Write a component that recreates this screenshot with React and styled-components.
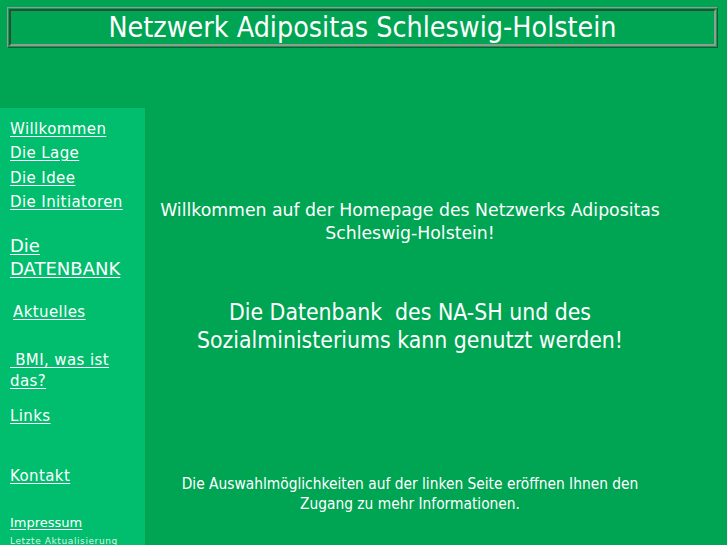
import React from "react";
import styled, { createGlobalStyle } from "styled-components";

const Global = createGlobalStyle`
  html, body { margin: 0; padding: 0; background: #00a553; }
  body { font-family: "DejaVu Sans", Verdana, sans-serif; color: #fff; }
  #root { min-height: 545px; }
`;

const Page = styled.div`
  width: 727px;
  height: 545px;
  overflow: hidden;
  display: flex;
  flex-direction: column;
`;

const HeaderOuter = styled.div`
  margin: 7px 9px 0 7px;
  padding: 1px;
  border: 1px solid;
  border-color: #8aa08f #2f4a38 #2f4a38 #8aa08f;
`;

const HeaderCell = styled.div`
  border: 2px solid;
  border-color: #2f4a38 #8aa08f #8aa08f #2f4a38;
  height: 32px;
  display: flex;
  align-items: center;
  justify-content: center;
  font-family: "DejaVu Sans Condensed", "DejaVu Sans", sans-serif;
  font-size: 28.4px;
  padding-bottom: 1px;
  box-sizing: content-box;
  color: #fff;
`;

const Body = styled.div`
  flex: 1;
  display: flex;
  margin-top: 60px;
`;

const Sidebar = styled.nav`
  width: 145px;
  background: #00be6e;
  padding: 9px 16px 0 10px;
  box-sizing: border-box;
  display: flex;
  flex-direction: column;
  align-items: flex-start;
`;

const NavLink = styled.a`
  color: #fff;
  text-decoration: underline;
  font-size: ${(p) => p.$size || 15}px;
  line-height: ${(p) => p.$lh || 24.3}px;
  margin-top: ${(p) => p.$mt || 0}px;
  padding-left: ${(p) => p.$indent || 0}px;
  letter-spacing: ${(p) => p.$ls ?? 0.4}px;
  text-underline-offset: 2px;
`;

const Updated = styled.div`
  font-size: 9px;
  line-height: 12px;
  letter-spacing: 0.6px;
  color: #d8f5e4;
  margin-top: 0;
`;

const Main = styled.main`
  flex: 1;
  display: flex;
  flex-direction: column;
  align-items: center;
  text-align: center;
  padding: 91px 52px 0 0;
`;

const Welcome = styled.p`
  margin: 0;
  font-size: 17.3px;
  line-height: 23px;
  white-space: nowrap;
`;

const Headline = styled.p`
  margin: 53px 0 0;
  font-family: "DejaVu Sans Condensed", "DejaVu Sans", sans-serif;
  font-size: 22.8px;
  line-height: 28px;
  white-space: nowrap;
`;

const Note = styled.p`
  margin: 120px 0 0;
  font-family: "DejaVu Sans Condensed", "DejaVu Sans", sans-serif;
  font-size: 15.35px;
  line-height: 20px;
  white-space: nowrap;
`;

export default function App() {
  return (
    <Page>
      <Global />
      <HeaderOuter>
        <HeaderCell>Netzwerk Adipositas Schleswig-Holstein</HeaderCell>
      </HeaderOuter>
      <Body>
        <Sidebar>
          <NavLink href="#">Willkommen</NavLink>
          <NavLink href="#">Die Lage</NavLink>
          <NavLink href="#">Die Idee</NavLink>
          <NavLink href="#">Die Initiatoren</NavLink>
          <NavLink href="#" $size={18} $lh={23} $mt={20} $ls={0}>Die<br />DATENBANK</NavLink>
          <NavLink href="#" $mt={20} $indent={3}>Aktuelles</NavLink>
          <NavLink href="#" $mt={26} $lh={21}>&nbsp;BMI, was ist<br />das?</NavLink>
          <NavLink href="#" $mt={12}>Links</NavLink>
          <NavLink href="#" $mt={35}>Kontakt</NavLink>
          <NavLink href="#" $size={13} $mt={23} $ls={0}>Impressum</NavLink>
          <Updated>Letzte Aktualisierung</Updated>
        </Sidebar>
        <Main>
          <Welcome>Willkommen auf der Homepage des Netzwerks Adipositas<br />Schleswig-Holstein!</Welcome>
          <Headline>Die Datenbank&nbsp; des NA-SH und des<br />Sozialministeriums kann genutzt werden!</Headline>
          <Note>Die Auswahlmöglichkeiten auf der linken Seite eröffnen Ihnen den<br />Zugang zu mehr Informationen.</Note>
        </Main>
      </Body>
    </Page>
  );
}
